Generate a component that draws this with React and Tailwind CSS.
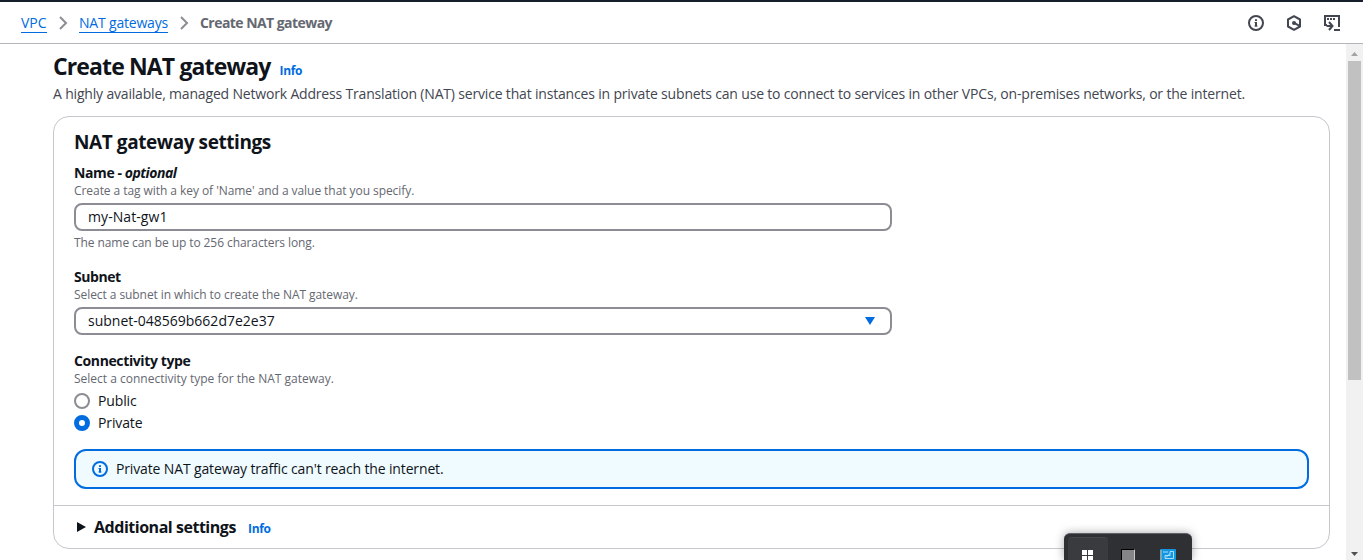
import React from 'react';

const label = 'text-[14px] leading-5 font-bold text-[#0f141a] whitespace-nowrap';
const hint = 'text-[12px] leading-4 text-[#656871] whitespace-nowrap';

function Chevron() {
  return (
    <svg className="block" width="16" height="16" viewBox="0 0 16 16" fill="none" stroke="#8c8c94" strokeWidth="2">
      <path d="M5 2l6 6-6 6" />
    </svg>
  );
}

function InfoIcon({ className }) {
  return (
    <svg className={className} width="16" height="16" viewBox="0 0 16 16" fill="none" stroke="currentColor" strokeWidth="2">
      <circle cx="8" cy="8" r="7" />
      <path d="M8 11.5V7M8 6V4.2" />
      <path d="M6.5 7.5H8M6.5 11h3" strokeWidth="1" />
    </svg>
  );
}

function HexIcon() {
  return (
    <svg width="16" height="16" viewBox="0 0 16 16" fill="none" stroke="currentColor" strokeWidth="2">
      <path d="M8 1.200l6 3.300v7L8 14.800l-6-3.300v-7z" strokeLinejoin="round" />
      <path d="M8.500 8.200l5 2.600" />
      <circle cx="8" cy="8" r="2" fill="currentColor" stroke="none" />
    </svg>
  );
}

function ShellIcon() {
  return (
    <svg width="16" height="16" viewBox="0 0 16 16" fill="none" stroke="currentColor" strokeWidth="2">
      <path d="M3 10H1V1h14v11" />
      <path d="M3 4h2M6 4h2M9 4h2" strokeWidth="1.800" />
      <path d="M2.500 11H8M5 7l3.500 4L5 15" />
      <path d="M10 15h6" />
    </svg>
  );
}

function TopBar() {
  return (
    <header className="flex h-11 items-center justify-between border-t-2 border-b border-t-[#161d2b] border-b-[#b4b4bb] pl-[21px] pr-[23px]">
      <nav className="flex items-center text-[14px] leading-5 whitespace-nowrap">
        <a className="w-[26px] border-b border-[#006ce0] pt-0.5 leading-[18px] text-[#006ce0]">VPC</a>
        <span className="mx-2"><Chevron /></span>
        <a className="w-[89px] border-b border-[#006ce0] pt-0.5 leading-[18px] tracking-[-0.191px] text-[#006ce0]">NAT gateways</a>
        <span className="mx-2"><Chevron /></span>
        <span className="pt-px font-bold tracking-[-0.55px] text-[#656871]">Create NAT gateway</span>
      </nav>
      <div className="flex items-center gap-[22px] text-[#424650]">
        <InfoIcon />
        <HexIcon />
        <ShellIcon />
      </div>
    </header>
  );
}

function Radio({ checked, children }) {
  return (
    <div className="flex h-5 items-center gap-2 text-[14px] leading-5 tracking-[-0.13px]">
      <span className={checked ? 'size-4 rounded-full border-[5px] border-[#006ce0] bg-white' : 'size-4 rounded-full border-2 border-[#8c8c94] bg-white'} />
      <span>{children}</span>
    </div>
  );
}

function Settings() {
  return (
    <section className="mt-3 h-[433px] w-[1277px] rounded-2xl border border-[#c6c6cd]">
      <div className="px-5 pt-[13px]">
        <h2 className="text-[19px] leading-6 font-bold tracking-[-0.42px] whitespace-nowrap">NAT gateway settings</h2>

        <div className="mt-[9px]">
          <div className={label}>
            <span className="tracking-[-0.4px]">Name - </span>
            <i className="tracking-[-0.5px]">optional</i>
          </div>
          <div className={`${hint} tracking-[-0.06px]`}>Create a tag with a key of 'Name' and a value that you specify.</div>
          <div className="mt-1 flex h-7 w-[818px] items-center rounded-lg border-2 border-[#8c8c94] px-3 text-[14px] leading-5 tracking-[0.08px]">my-Nat-gw1</div>
          <div className={`${hint} mt-1 tracking-[-0.08px]`}>The name can be up to 256 characters long.</div>
        </div>

        <div className="mt-4">
          <div className={`${label} tracking-[-0.45px]`}>Subnet</div>
          <div className={`${hint} tracking-[-0.07px]`}>Select a subnet in which to create the NAT gateway.</div>
          <div className="mt-1 flex h-7 w-[818px] items-center justify-between rounded-lg border-2 border-[#8c8c94] pr-[15px] pl-3 text-[14px] leading-5">
            <span>subnet-048569b662d7e2e37</span>
            <svg width="10" height="8" viewBox="0 0 10 8" fill="#006ce0"><path d="M0 0h10L5 8z" /></svg>
          </div>
        </div>

        <div className="mt-4">
          <div className={`${label} tracking-[-0.38px]`}>Connectivity type</div>
          <div className={hint}>Select a connectivity type for the NAT gateway.</div>
          <div className="mt-1 flex flex-col gap-0.5">
            <Radio>Public</Radio>
            <Radio checked>Private</Radio>
          </div>
        </div>

        <div className="mt-4 flex h-10 items-center gap-2 rounded-xl border-2 border-[#006ce0] bg-[#f0fbff] px-4 text-[14px] leading-5 tracking-[-0.14px]">
          <InfoIcon className="text-[#006ce0]" />
          <span>Private NAT gateway traffic can't reach the internet.</span>
        </div>
      </div>

      <div className="mt-4 flex h-[43px] items-center border-t border-[#c6c6cd] pl-[23px]">
        <svg width="9" height="10" viewBox="0 0 9 10" fill="#0f141a"><path d="M0 0l9 5-9 5z" /></svg>
        <h3 className="ml-2 w-[142px] text-[16px] leading-5 font-bold tracking-[-0.47px] whitespace-nowrap">Additional settings</h3>
        <a className="ml-3 pt-[3px] text-[12px] leading-[17px] font-bold tracking-[-0.3px] text-[#006ce0]">Info</a>
      </div>
    </section>
  );
}

function Scrollbar() {
  return (
    <div className="flex h-[516px] w-[17px] flex-col items-center bg-[#f1f1f1]">
      <div className="flex h-[17px] items-center pt-0.5">
        <svg width="7" height="4" viewBox="0 0 7 4" fill="#a3a3a3"><path d="M3.500 0L7 4H0z" /></svg>
      </div>
      <div className="h-[319px] w-[13px] bg-[#c1c1c1]" />
      <div className="mt-auto flex h-[17px] items-center pt-1">
        <svg width="7" height="4" viewBox="0 0 7 4" fill="#505050"><path d="M0 0h7L3.500 4z" /></svg>
      </div>
    </div>
  );
}

function TaskbarPreview() {
  return (
    <div className="absolute top-[533px] left-[1064px] flex h-[27px] w-32 overflow-hidden rounded-t-md border-t border-[#606267] bg-[#2e3033] pt-[3px] pl-1 shadow-[0_0_10px_rgba(0,0,0,0.35)]">
      <div className="h-6 w-10 rounded-t-sm border-t border-[#45474a] bg-[#393b3e] pt-3 pl-[14px]">
        <div className="grid w-[11px] grid-cols-2 gap-px">
          <span className="h-[5px] bg-white" />
          <span className="h-[5px] bg-white" />
          <span className="h-[5px] bg-white" />
          <span className="h-[5px] bg-white" />
        </div>
      </div>
      <div className="mt-3 ml-[13px] h-4 w-[14px] border-t border-r border-l border-t-black border-r-[#c8c8c8] border-l-black bg-[#858585]" />
      <svg className="mt-3 ml-[25px]" width="16" height="16" viewBox="0 0 16 16" fill="none">
        <rect width="16" height="16" rx="1" fill="#1495e0" />
        <path d="M0 1v15h2V1z" fill="#77a9b8" />
        <path d="M3 3h5M10 2.500h3.500v7H5v-3h5zM6 8.500l4-4M5 11.500h8" stroke="#b6e8ff" strokeWidth="0.900" />
      </svg>
    </div>
  );
}

export default function App() {
  return (
    <div className="relative h-[560px] w-[1363px] overflow-hidden bg-white font-['Open_Sans','Noto_Sans',sans-serif] text-[#0f141a]">
      <TopBar />
      <div className="flex justify-between">
        <main className="pt-[7px] pl-[53px]">
          <div className="flex items-baseline gap-[9px] whitespace-nowrap">
            <h1 className="text-[23px] leading-[30px] font-bold tracking-[-0.87px]">Create NAT gateway</h1>
            <a className="text-[12px] leading-4 font-bold tracking-[-0.3px] text-[#006ce0]">Info</a>
          </div>
          <p className="mt-[3px] text-[14px] leading-5 tracking-[-0.177px] whitespace-nowrap text-[#424650]">
            A highly available, managed Network Address Translation (NAT) service that instances in private subnets can use to connect to services in other VPCs, on-premises networks, or the internet.
          </p>
          <Settings />
        </main>
        <Scrollbar />
      </div>
      <TaskbarPreview />
    </div>
  );
}
